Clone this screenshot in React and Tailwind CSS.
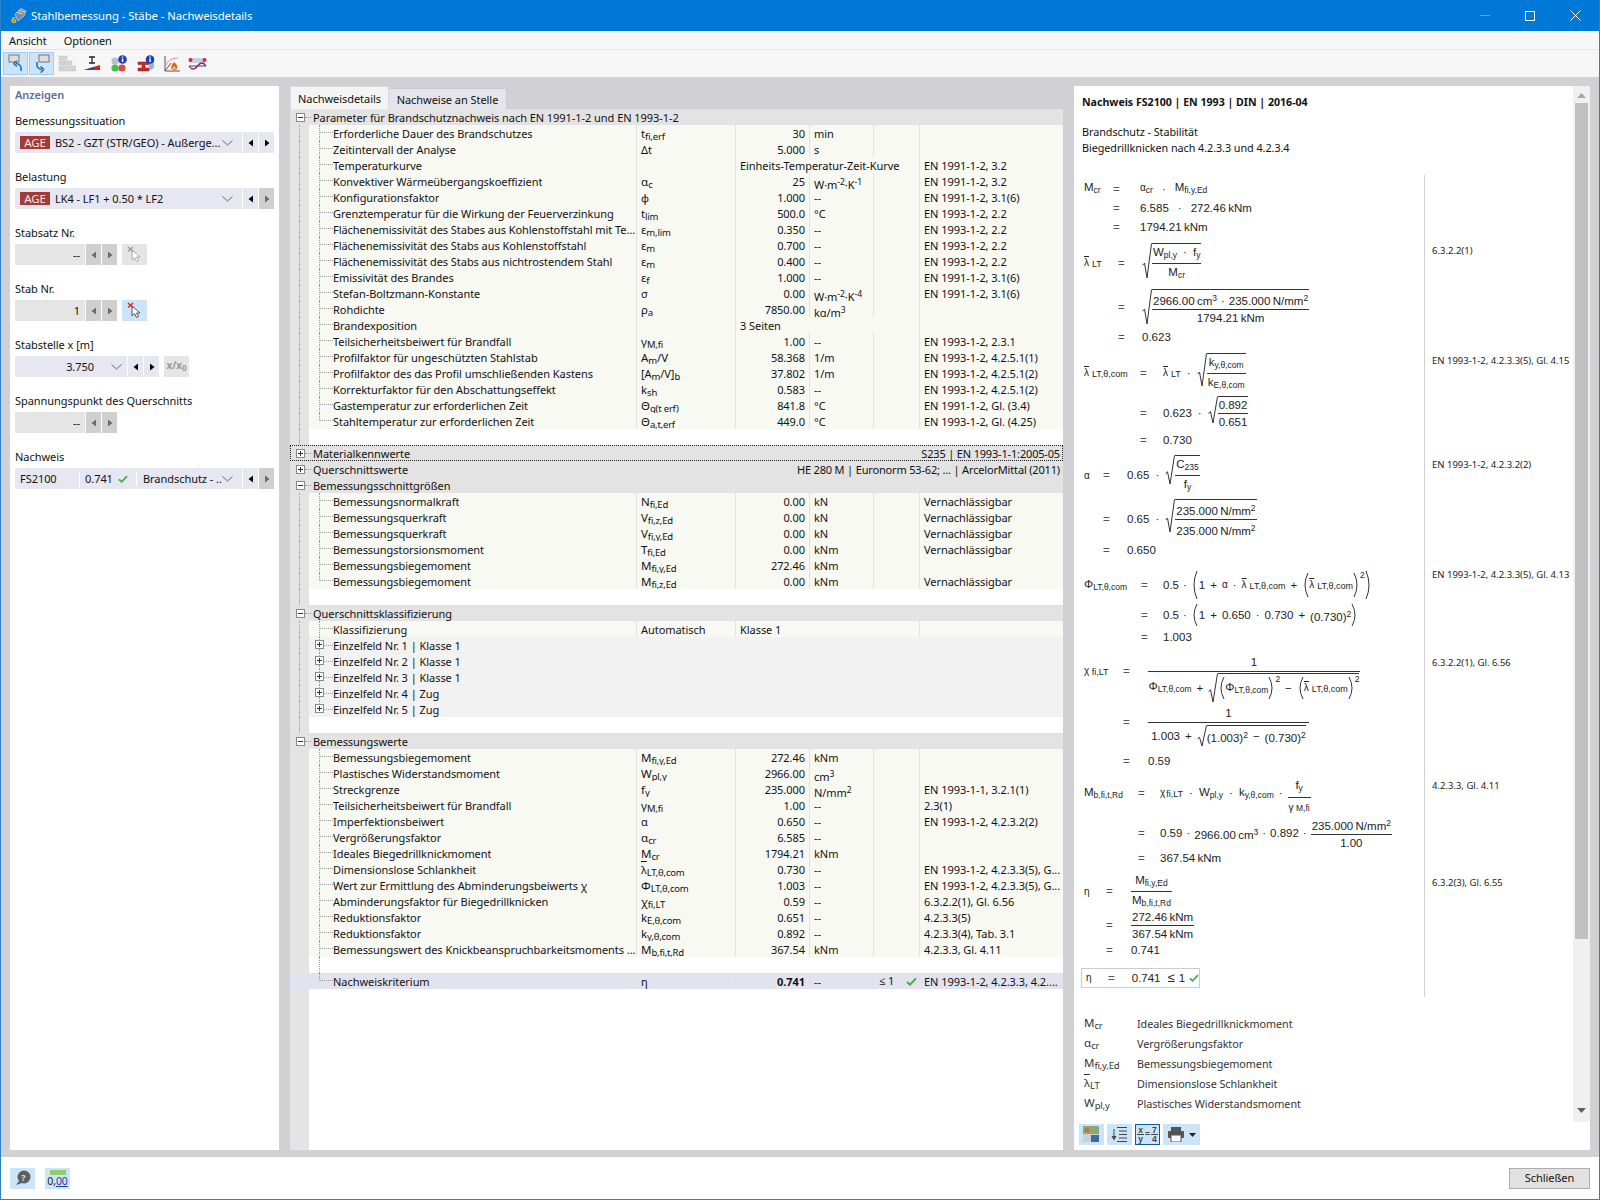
import React from "react";

const Sub = ({ children }) => <span className="text-[9.5px] align-[-2px] tracking-[-0.2px]">{children}</span>;
const Sup = ({ children }) => <span className="text-[8.5px] align-[4px]">{children}</span>;
const S = (m, s, t) => (<span className="text-[11.5px]">{m}<Sub>{s}</Sub>{t}</span>);
const Tick = ({ className = "w-[12px] h-[10px]" }) => (
  <svg viewBox="0 0 12 10" className={className}><path d="M1 5.5 L4.3 8.5 L11 1.5" fill="none" stroke="#3cb043" strokeWidth="2.2" /></svg>
);
const Box = ({ minus }) => (
  <svg width="9" height="9" viewBox="0 0 9 9" className="shrink-0 bg-white">
    <rect x="0.5" y="0.5" width="8" height="8" fill="none" stroke="#8a8a8a" />
    <path d={minus ? "M2 4.5H7" : "M2 4.5H7M4.5 2V7"} stroke="#333" />
  </svg>
);
const Gutter = ({ line = true, bg = "bg-[#e4e4e4]" }) => (
  <div className={`w-[19px] shrink-0 h-full ${bg}`}>
    {line && <div className="ml-[9px] h-full border-l border-dotted border-[#9a9a9a]" />}
  </div>
);
const HeaderRow = ({ title, right, plus, focus }) => (
  <div className={`flex items-center h-4 bg-[#e3e3e3] pl-[6px] ${focus ? "outline-1 outline-dotted outline-[#222] -outline-offset-1" : ""}`}>
    <Box minus={!plus} />
    <div className="w-[6px] h-0 mr-[2px] border-t border-dotted border-[#999]" />
    <span className="truncate mt-px">{title}</span>
    {right && <span className="ml-auto pr-[3px] mt-px tracking-[-0.17px]">{right}</span>}
  </div>
);
const Blank = ({ tree, line = true }) => (
  <div className="flex h-4 bg-white">
    <Gutter line={line} />
    {tree && <div className="ml-[10px] h-full border-l border-dotted border-[#9a9a9a]" />}
  </div>
);
const Tree = ({ last }) => (
  <div className={`w-[14px] shrink-0 h-full ${last ? "" : "border-l border-dotted border-[#9a9a9a]"}`}>
    <div className={`h-[8px] border-b border-dotted border-[#9a9a9a] ${last ? "border-l" : ""}`} />
  </div>
);
const col = "border-l border-[#e2e2e2] h-full";
const Row = ({ r, last, bg = "bg-[#f9f9f3]", line = true, gutter }) => (
  <div className={`flex h-4 leading-[18px] ${bg}`}>
    <Gutter line={line} bg={gutter} />
    <div className="w-[327px] shrink-0 flex pl-[10px] overflow-hidden">
      <Tree last={last} />
      <span className="whitespace-nowrap overflow-hidden">{r[0]}</span>
    </div>
    <div className={`w-[99px] shrink-0 pl-[4px] ${col}`}>{r[1]}</div>
    {r[5] ? (
      <div className={`w-[138px] shrink-0 pl-[4px] whitespace-nowrap ${col}`}>{r[5]}</div>
    ) : (
      <>
        <div className={`w-[74px] shrink-0 pr-[4px] text-right ${col} ${r[6] ? "font-bold" : ""}`}>{r[2]}</div>
        <div className={`w-[64px] shrink-0 pl-[4px] ${col}`}>{r[3]}</div>
      </>
    )}
    <div className={`w-[46px] shrink-0 ${r[5] ? "" : col} flex items-center`}>{r[6] && <><span className="ml-[5px]">≤ 1</span><Tick className="ml-[12px] w-[11px] h-[9px]" /></>}</div>
    <div className={`flex-1 pl-[4px] whitespace-nowrap overflow-hidden ${col}`}>{r[4]}</div>
  </div>
);
const W2K1 = <span>W·m<Sup>-2</Sup>·K<Sup>-1</Sup></span>;
const W2K4 = <span>W·m<Sup>-2</Sup>·K<Sup>-4</Sup></span>;
const sec1 = [
  ["Erforderliche Dauer des Brandschutzes", S("t", "fi,erf"), "30", "min", ""],
  ["Zeitintervall der Analyse", "Δt", "5.000", "s", ""],
  ["Temperaturkurve", "", "", "", "EN 1991-1-2, 3.2", "Einheits-Temperatur-Zeit-Kurve"],
  ["Konvektiver Wärmeübergangskoeffizient", S("α", "c"), "25", W2K1, "EN 1991-1-2, 3.2"],
  ["Konfigurationsfaktor", "φ", "1.000", "--", "EN 1991-1-2, 3.1(6)"],
  ["Grenztemperatur für die Wirkung der Feuerverzinkung", S("t", "lim"), "500.0", "°C", "EN 1993-1-2, 2.2"],
  ["Flächenemissivität des Stabes aus Kohlenstoffstahl mit Te…", S("ε", "m,lim"), "0.350", "--", "EN 1993-1-2, 2.2"],
  ["Flächenemissivität des Stabs aus Kohlenstoffstahl", S("ε", "m"), "0.700", "--", "EN 1993-1-2, 2.2"],
  ["Flächenemissivität des Stabs aus nichtrostendem Stahl", S("ε", "m"), "0.400", "--", "EN 1993-1-2, 2.2"],
  ["Emissivität des Brandes", S("ε", "f"), "1.000", "--", "EN 1991-1-2, 3.1(6)"],
  ["Stefan-Boltzmann-Konstante", "σ", "0.00", W2K4, "EN 1991-1-2, 3.1(6)"],
  ["Rohdichte", S("ρ", "a"), "7850.00", <span>kg/m<Sup>3</Sup></span>, ""],
  ["Brandexposition", "", "", "", "", "3 Seiten"],
  ["Teilsicherheitsbeiwert für Brandfall", S("γ", "M,fi"), "1.00", "--", "EN 1993-1-2, 2.3.1"],
  ["Profilfaktor für ungeschützten Stahlstab", S("A", "m", "/V"), "58.368", "1/m", "EN 1993-1-2, 4.2.5.1(1)"],
  ["Profilfaktor des das Profil umschließenden Kastens", <span>[A<Sub>m</Sub>/V]<Sub>b</Sub></span>, "37.802", "1/m", "EN 1993-1-2, 4.2.5.1(2)"],
  ["Korrekturfaktor für den Abschattungseffekt", S("k", "sh"), "0.583", "--", "EN 1993-1-2, 4.2.5.1(2)"],
  ["Gastemperatur zur erforderlichen Zeit", S("Θ", "g(t erf)"), "841.8", "°C", "EN 1991-1-2, Gl. (3.4)"],
  ["Stahltemperatur zur erforderlichen Zeit", S("Θ", "a,t,erf"), "449.0", "°C", "EN 1993-1-2, Gl. (4.25)"],
];
const sec2 = [
  ["Bemessungsnormalkraft", S("N", "fi,Ed"), "0.00", "kN", "Vernachlässigbar"],
  ["Bemessungsquerkraft", S("V", "fi,z,Ed"), "0.00", "kN", "Vernachlässigbar"],
  ["Bemessungsquerkraft", S("V", "fi,y,Ed"), "0.00", "kN", "Vernachlässigbar"],
  ["Bemessungstorsionsmoment", S("T", "fi,Ed"), "0.00", "kNm", "Vernachlässigbar"],
  ["Bemessungsbiegemoment", S("M", "fi,y,Ed"), "272.46", "kNm", ""],
  ["Bemessungsbiegemoment", S("M", "fi,z,Ed"), "0.00", "kNm", "Vernachlässigbar"],
];
const sec3 = [
  ["Bemessungsbiegemoment", S("M", "fi,y,Ed"), "272.46", "kNm", ""],
  ["Plastisches Widerstandsmoment", S("W", "pl,y"), "2966.00", <span>cm<Sup>3</Sup></span>, ""],
  ["Streckgrenze", S("f", "y"), "235.000", <span>N/mm<Sup>2</Sup></span>, "EN 1993-1-1, 3.2.1(1)"],
  ["Teilsicherheitsbeiwert für Brandfall", S("γ", "M,fi"), "1.00", "--", "2.3(1)"],
  ["Imperfektionsbeiwert", "α", "0.650", "--", "EN 1993-1-2, 4.2.3.2(2)"],
  ["Vergrößerungsfaktor", S("α", "cr"), "6.585", "--", ""],
  ["Ideales Biegedrillknickmoment", S("M", "cr"), "1794.21", "kNm", ""],
  ["Dimensionslose Schlankheit", <span><span className="overline">λ</span><Sub>LT,θ,com</Sub></span>, "0.730", "--", "EN 1993-1-2, 4.2.3.3(5), G..."],
  ["Wert zur Ermittlung des Abminderungsbeiwerts χ", S("Φ", "LT,θ,com"), "1.003", "--", "EN 1993-1-2, 4.2.3.3(5), G..."],
  ["Abminderungsfaktor für Biegedrillknicken", S("χ", "fi,LT"), "0.59", "--", "6.3.2.2(1), Gl. 6.56"],
  ["Reduktionsfaktor", S("k", "E,θ,com"), "0.651", "--", "4.2.3.3(5)"],
  ["Reduktionsfaktor", S("k", "y,θ,com"), "0.892", "--", "4.2.3.3(4), Tab. 3.1"],
  ["Bemessungswert des Knickbeanspruchbarkeitsmoments ...", S("M", "b,fi,t,Rd"), "367.54", "kNm", "4.2.3.3, Gl. 4.11"],
];

const Tri = ({ dir = "r", off }) => (
  <svg width="6" height="8" viewBox="0 0 6 8"><path d={dir === "r" ? "M1 0.5 L5.5 4 L1 7.5Z" : "M5 0.5 L0.5 4 L5 7.5Z"} fill={off ? "#6a6a6a" : "#000"} /></svg>
);
const Step = ({ dir, off, gray }) => (
  <div className={`w-[15px] h-[21px] ml-px flex items-center justify-center ${gray ? "bg-[#cfcfcf]" : "bg-[#e6e7f1]"}`}><Tri dir={dir} off={off} /></div>
);
const Chev = () => (
  <svg width="11" height="6" viewBox="0 0 11 6" className="shrink-0"><path d="M0.5 0.5 L5.5 5 L10.5 0.5" fill="none" stroke="#666" /></svg>
);
const Age = () => <span className="w-[30px] h-[13px] mr-[5px] bg-[#a33a35] text-[#f7e9e8] text-[11.5px] leading-[13px] text-center shrink-0">AGE</span>;
const Field = ({ label, children }) => (
  <div className="h-[56px]">
    <div className="h-[22px] leading-[22px]">{label}</div>
    <div className="flex h-[21px]">{children}</div>
  </div>
);
const Sel = ({ children }) => (
  <div className="w-[227px] flex items-center bg-[#e6e7f1] pl-[5px] pr-[9px]"><span className="flex-1 flex items-center whitespace-nowrap overflow-hidden">{children}</span><Chev /></div>
);
const Gray = ({ v }) => <div className="w-[70px] bg-[#e5e5e5] text-right pr-[5px] leading-[21px]">{v}</div>;
const Cursor = ({ red }) => (
  <div className={`w-[25px] h-[21px] ml-[5px] flex items-center justify-center ${red ? "bg-[#cce4f7]" : "bg-[#e5e5e5]"}`}>
    <svg width="16" height="17" viewBox="0 0 16 17">
      <path d="M5 4 L5 14 L7.5 11.5 L9.5 15.5 L11.5 14.5 L9.5 11 L13 11Z" fill="#fff" stroke={red ? "#555" : "#aaa"} />
      <path d="M1 1 L6 5.5 M6 1 L1 5.5" stroke={red ? "#e02020" : "#999"} strokeWidth="1.4" />
    </svg>
  </div>
);

/* math */
const m = "text-[8.5px] align-[-2px]";
const M = ({ a, b }) => <span className="whitespace-nowrap">{a}<span className={m}>{b}</span></span>;
const Lam = ({ b }) => <span className="whitespace-nowrap"><span className="overline text-[10px]">λ</span><span className="text-[9px] align-[-1px] ml-[3px]">{b}</span></span>;
const Th = "LT,θ,com";
const Dot = ({ cls = "mx-[6px]" }) => <span className={cls}>·</span>;
const Pl = ({ c = "+" }) => <span className="mx-[5px]">{c}</span>;
const Frac = ({ a, b, cls = "" }) => (
  <span className={`inline-flex flex-col items-center leading-[16px] ${cls}`}>
    <span className="px-px whitespace-nowrap">{a}</span>
    <span className="self-stretch border-t border-[#333] px-px text-center whitespace-nowrap">{b}</span>
  </span>
);
const Rad = ({ h = 34, children }) => (
  <span className="inline-flex items-stretch">
    <svg width="10" height={h} viewBox={`0 0 10 ${h}`} className="shrink-0"><path d={`M0.5 ${h * 0.62} L2.5 ${h * 0.56} L5 ${h - 1} L9.5 0.5`} fill="none" stroke="#333" /></svg>
    <span className="border-t border-[#333] inline-flex items-center">{children}</span>
  </span>
);
const Par = ({ h = 30, right }) => (
  <svg width="7" height={h} viewBox={`0 0 7 ${h}`} className="shrink-0"><path d={right ? `M1 1 Q7 ${h / 2} 1 ${h - 1}` : `M6 1 Q0 ${h / 2} 6 ${h - 1}`} fill="none" stroke="#333" /></svg>
);
const NMM = <span>N/mm<Sup>2</Sup></span>;
const Pw = ({ children }) => <span className="whitespace-nowrap">{children}<Sup>2</Sup></span>;
const PS = () => <span className="self-start text-[8.5px] leading-[10px]">2</span>;
const MRow = ({ cls, L, E, label, up = "", children }) => (
  <div className={`flex items-center ${cls}`}>
    <div className={`${L} shrink-0 ${up}`}>{label}</div>
    <div className={`${E} shrink-0 text-[#555] ${up}`}>=</div>
    <div className="flex items-center whitespace-nowrap">{children}</div>
  </div>
);
const Group = ({ r, pt = "", children }) => (
  <div className="flex">
    <div className="w-[340px] shrink-0">{children}</div>
    <div className={`flex-1 border-l border-[#cfcfcf] pl-[7px] text-[9.5px] leading-[12px] whitespace-nowrap font-['Noto_Sans',sans-serif] ${pt}`}>{r}</div>
  </div>
);

const Btn = ({ children, cls = "" }) => <div className={`h-[21px] flex items-center justify-center bg-[#cce4f7] ${cls}`}>{children}</div>;

export default function App() {
  return (
    <div className="w-[1600px] h-[1200px] flex flex-col overflow-hidden border-x border-b border-[#2b7fcb] bg-white text-[#111] text-[11px] tracking-[-0.05px] leading-4 font-['Noto_Sans','Open_Sans',sans-serif]">
      {/* title bar */}
      <div className="h-[31px] shrink-0 bg-[#0078d7] flex items-center text-white text-[11.3px]">
        <svg width="17" height="17" viewBox="0 0 17 17" className="ml-[9px] mr-[4px]">
          <path d="M5 7 L11 1.5 L16 4 L14 9 L8 14Z" fill="#7c8a96" stroke="#d5dde3" strokeWidth=".7" />
          <path d="M7 5.5 L13 7 M9 3.5 L15 5" stroke="#e6ecf0" strokeWidth=".8" />
          <text x="1" y="16" fontSize="9" fontWeight="700" fill="#f0c020">6</text>
        </svg>
        <span>Stahlbemessung - Stäbe - Nachweisdetails</span>
        <div className="ml-auto flex items-center">
          <div className="w-[10px] h-px bg-[#5aa7e6] mr-[35px]" />
          <div className="w-[10px] h-[10px] border border-white mr-[35px]" />
          <svg width="11" height="11" viewBox="0 0 11 11" className="mr-[18px]"><path d="M.5 .5 L10.5 10.5 M10.5 .5 L.5 10.5" stroke="#fff" /></svg>
        </div>
      </div>
      {/* menu */}
      <div className="h-[19px] shrink-0 bg-[#f6f6f6] border-b border-[#e6e6e6] flex items-center pl-[8px] pt-[2px] gap-[17px]">
        <span>Ansicht</span><span>Optionen</span>
      </div>
      {/* toolbar */}
      <div className="h-[27px] shrink-0 bg-[#f6f6f6] flex items-center pl-[2px]">
        <div className="w-[25px] h-[23px] bg-[#cce4f7] border border-[#a3cdf0] flex items-center justify-center">
          <svg width="18" height="19" viewBox="0 0 18 19"><rect x="2" y="1" width="10" height="7" fill="#ddd" stroke="#777" /><path d="M14 17 Q15 10 9 9.5 M6.5 9.5 L10 7 M6.5 9.5 L10 12.5" fill="none" stroke="#2b6cb0" strokeWidth="1.6" /></svg>
        </div>
        <div className="w-[25px] h-[23px] ml-[1px] bg-[#cce4f7] border border-[#a3cdf0] flex items-center justify-center">
          <svg width="18" height="19" viewBox="0 0 18 19"><rect x="6" y="1" width="10" height="7" fill="#ddd" stroke="#777" /><path d="M4 8 Q3 15 9 15.5 M11 15.5 L7.5 12.5 M11 15.5 L7.5 18.5" fill="none" stroke="#2b6cb0" strokeWidth="1.6" /></svg>
        </div>
        <svg width="18" height="18" viewBox="0 0 18 18" className="ml-[4px]"><path d="M1 1h8v4H1zM1 6h5v4H1zM1 11h17v5H1zM6 6h8v4H6z" fill="#d4d4d4" stroke="#c4c4c4" strokeWidth=".5" /></svg>
        <svg width="18" height="18" viewBox="0 0 18 18" className="ml-[7px]"><path d="M6 2h6M9 2v6M6 8h6" stroke="#223" strokeWidth="1.3" /><path d="M1 15 L17 10 L17 15Z" fill="#c62828" /><path d="M1 15 L11 12 L11 15Z" fill="#1d4e9e" /></svg>
        <svg width="18" height="18" viewBox="0 0 18 18" className="ml-[9px]"><circle cx="5" cy="6" r="3.6" fill="#bcbcc8" /><circle cx="5" cy="13" r="3.6" fill="#41c24a" /><circle cx="12" cy="13" r="3.6" fill="#e0474c" /><circle cx="12.5" cy="4.5" r="4.3" fill="#1a3fb0" /><rect x="11.8" y="3.5" width="1.5" height="3.5" fill="#fff" /><rect x="11.8" y="1.5" width="1.5" height="1.2" fill="#fff" /></svg>
        <svg width="18" height="18" viewBox="0 0 18 18" className="ml-[9px]"><path d="M1 7h11v2.5H8V13h4v3H1v-3h4V9.5H1z" fill="#c92a2a" stroke="#7a1818" strokeWidth=".5" /><path d="M12 7 L17 6 V13 L12 16Z" fill="#9fb2cc" /><circle cx="13" cy="4.5" r="4.3" fill="#1a3fb0" /><rect x="12.3" y="3.5" width="1.5" height="3.5" fill="#fff" /><rect x="12.3" y="1.5" width="1.5" height="1.2" fill="#fff" /></svg>
        <svg width="18" height="18" viewBox="0 0 18 18" className="ml-[8px]"><path d="M2 1V16H17 M2 16 L8 8" fill="none" stroke="#555" /><path d="M2 12 Q5 3 15 3" fill="none" stroke="#e59090" /><path d="M11 7 Q15 10 14 13.5 A3.4 3.4 0 0 1 8 13 Q8 10 11 7Z" fill="#e2611c" /><circle cx="11" cy="13" r="1.6" fill="#ffd24a" /></svg>
        <svg width="19" height="18" viewBox="0 0 19 18" className="ml-[7px]"><rect x="2" y="3" width="15" height="5" fill="#c4d2e4" /><circle cx="2.5" cy="5" r="2" fill="#d62828" /><circle cx="16.5" cy="5" r="2" fill="#d62828" /><path d="M1 11 H18" stroke="#445" /><path d="M1 11 Q5 17 9.5 11 T18 11" fill="none" stroke="#8a1c6c" strokeWidth="1.3" /></svg>
      </div>
      {/* main */}
      <div className="flex-1 min-h-0 bg-[#d1d0d5] flex pl-[9px] pr-[9px] pt-[9px] pb-[7px]">
        {/* left panel */}
        <div className="w-[269px] shrink-0 bg-white pl-[5px]">
          <div className="h-[24px] leading-[18px] font-semibold text-[#5b6d9c]">Anzeigen</div>
          <Field label="Bemessungssituation">
            <Sel><Age />BS2 - GZT (STR/GEO) - Außerge...</Sel><Step dir="l" /><Step />
          </Field>
          <Field label="Belastung">
            <Sel><Age />LK4 - LF1 + 0.50 * LF2</Sel><Step dir="l" /><Step off gray />
          </Field>
          <Field label="Stabsatz Nr."><Gray v="--" /><Step dir="l" off gray /><Step off gray /><Cursor /></Field>
          <Field label="Stab Nr."><Gray v="1" /><Step dir="l" off gray /><Step off gray /><Cursor red /></Field>
          <Field label="Stabstelle x [m]">
            <div className="w-[112px] bg-[#e6e7f1] flex items-center justify-end pr-[5px]"><span className="mr-[17px]">3.750</span><Chev /></div>
            <Step dir="l" /><Step />
            <div className="w-[25px] h-[21px] ml-[5px] bg-[#e5e5e5] text-[#999] text-[10px] font-bold flex items-center justify-center"><span>x/x<span className="text-[8px] align-[-2px]">0</span></span></div>
          </Field>
          <Field label="Spannungspunkt des Querschnitts"><Gray v="--" /><Step dir="l" off gray /><Step off gray /></Field>
          <Field label="Nachweis">
            <div className="w-[227px] flex items-center bg-[#e6e7f1]">
              <span className="w-[65px] pl-[5px] border-r border-white">FS2100</span>
              <span className="w-[57px] pl-[5px] flex items-center border-r border-white gap-[5px]">0.741<Tick className="w-[10px] h-[8px]" /></span>
              <span className="flex-1 pl-[6px] whitespace-nowrap overflow-hidden">Brandschutz - ...</span>
              <span className="pr-[9px]"><Chev /></span>
            </div>
            <Step dir="l" /><Step off gray />
          </Field>
        </div>
        {/* center */}
        <div className="w-[773px] shrink-0 ml-[11px] flex flex-col">
          <div className="h-[23px] shrink-0 flex items-end">
            <div className="w-[99px] h-[23px] bg-[#f4f4f4] border-x border-t border-[#d9d9df] pt-px flex items-center justify-center">Nachweisdetails</div>
            <div className="w-[118px] h-[21px] bg-[#e4e4ea] border-r border-t border-[#c9c9d6] pt-px flex items-center justify-center">Nachweise an Stelle</div>
          </div>
          <div className="flex-1 min-h-0 bg-white flex flex-col">
            <HeaderRow title="Parameter für Brandschutznachweis nach EN 1991-1-2 und EN 1993-1-2" />
            {sec1.map((r, i) => <Row key={i} r={r} last={i === sec1.length - 1} />)}
            <Blank />
            <HeaderRow focus plus title="Materialkennwerte" right="S235 | EN 1993-1-1:2005-05" />
            <HeaderRow plus title="Querschnittswerte" right="HE 280 M | Euronorm 53-62; ... | ArcelorMittal (2011)" />
            <HeaderRow title="Bemessungsschnittgrößen" />
            {sec2.map((r, i) => <Row key={i} r={r} last={i === sec2.length - 1} />)}
            <Blank />
            <HeaderRow title="Querschnittsklassifizierung" />
            <div className="flex h-4 leading-[18px] bg-[#f9f9f3]">
              <Gutter />
              <div className="w-[327px] shrink-0 flex pl-[10px]"><Tree /><span>Klassifizierung</span></div>
              <div className={`w-[99px] pl-[4px] ${col}`}>Automatisch</div>
              <div className={`w-[184px] pl-[4px] ${col}`}>Klasse 1</div>
              <div className={`flex-1 ${col}`} />
            </div>
            {["Einzelfeld Nr. 1 | Klasse 1", "Einzelfeld Nr. 2 | Klasse 1", "Einzelfeld Nr. 3 | Klasse 1", "Einzelfeld Nr. 4 | Zug", "Einzelfeld Nr. 5 | Zug"].map((t, i) => (
              <div key={i} className="flex h-4 bg-[#f2f2f2] items-center">
                <Gutter />
                <div className="ml-[6px] w-[9px] h-full flex flex-col items-center">
                  <div className="h-[3px] border-l border-dotted border-[#9a9a9a]" />
                  <Box />
                  {i < 4 && <div className="flex-1 border-l border-dotted border-[#9a9a9a]" />}
                </div>
                <div className="w-[9px] h-0 border-t border-dotted border-[#999]" />
                <span className="mt-px">{t}</span>
              </div>
            ))}
            <Blank />
            <HeaderRow title="Bemessungswerte" />
            {sec3.map((r, i) => <Row key={i} r={r} line={false} />)}
            <Blank tree line={false} />
            <Row line={false} last bg="bg-[#e3e3f0]" gutter="bg-[#e3e3f0]" r={["Nachweiskriterium", "η", "0.741", "--", "EN 1993-1-2, 4.2.3.3, 4.2....", null, true]} />
            <div className="flex-1 flex"><Gutter line={false} /></div>
          </div>
        </div>
        {/* right */}
        <div className="w-[516px] shrink-0 ml-[11px] bg-white flex flex-col">
          <div className="flex h-[1036px] shrink-0">
            <div className="flex-1 min-w-0 overflow-hidden pl-[8px]">
              <div className="mt-[8px] h-4 font-bold text-[10.6px] tracking-normal">Nachweis FS2100 | EN 1993 | DIN | 2016-04</div>
              <div className="mt-[14px] h-4 text-[10.8px] leading-4">Brandschutz - Stabilität</div>
              <div className="h-[15px] text-[10.8px] leading-[15px]">Biegedrillknicken nach 4.2.3.3 und 4.2.3.4</div>
              <div className="mt-[20px] -ml-[6px] pl-[8px] text-[11.5px] tracking-normal leading-[14px] text-[#222] font-['Liberation_Sans',Arial,sans-serif]">
                <Group>
                  <MRow cls="mt-[4px] h-[19px]" L="w-[29px]" E="w-[27px]" label={<M a="M" b="cr" />}><M a={<span className="text-[10px]">α</span>} b="cr" /><Dot cls="mx-[9px]" /><M a="M" b="fi,y,Ed" /></MRow>
                  <MRow cls="h-[19px]" L="w-[29px]" E="w-[27px]">6.585<Dot cls="mx-[9px]" />272.46{"\u2009"}kNm</MRow>
                  <MRow cls="h-[19px]" L="w-[29px]" E="w-[27px]">1794.21{"\u2009"}kNm</MRow>
                </Group>
                <Group r="6.3.2.2(1)" pt="pt-[9px]">
                  <MRow cls="mt-[9px] h-[36px]" L="w-[34px]" E="w-[24px]" label={<Lam b="LT" />}><Rad h={36}><Frac a={<><M a="W" b="pl,y" /><Dot /><M a="f" b="y" /></>} b={<M a="M" b="cr" />} /></Rad></MRow>
                  <MRow cls="mt-[8px] h-[36px]" L="w-[34px]" E="w-[24px]"><Rad h={36}><Frac a={<>2966.00{"\u2009"}cm<Sup>3</Sup><Dot cls="mx-[4px]" />235.000{"\u2009"}{NMM}</>} b={"1794.21\u2009kNm"} /></Rad></MRow>
                  <MRow cls="mt-[2px] h-[19px]" L="w-[34px]" E="w-[24px]">0.623</MRow>
                </Group>
                <Group r="EN 1993-1-2, 4.2.3.3(5), Gl. 4.15" pt="pt-[9px]">
                  <MRow cls="mt-[10px] h-[34px]" L="w-[56px]" E="w-[23px]" label={<Lam b={Th} />}><Lam b="LT" /><Dot /><Rad h={34}><Frac a={<M a="k" b="y,θ,com" />} b={<M a="k" b="E,θ,com" />} /></Rad></MRow>
                  <MRow cls="mt-[9px] h-[28px]" L="w-[56px]" E="w-[23px]">0.623<Dot /><Rad h={28}><Frac cls="leading-[13px]" a="0.892" b="0.651" /></Rad></MRow>
                  <MRow cls="mt-[3px] h-[19px]" L="w-[56px]" E="w-[23px]">0.730</MRow>
                </Group>
                <Group r="EN 1993-1-2, 4.2.3.2(2)" pt="pt-[10px]">
                  <MRow cls="mt-[11px] h-[30px]" L="w-[19px]" E="w-[24px]" label={<span className="text-[10px]">α</span>}>0.65<Dot /><Rad h={30}><Frac cls="leading-[14px]" a={<M a="C" b="235" />} b={<M a="f" b="y" />} /></Rad></MRow>
                  <MRow cls="mt-[12px] h-[34px]" L="w-[19px]" E="w-[24px]">0.65<Dot /><Rad h={34}><Frac a={<>235.000{"\u2009"}{NMM}</>} b={<>235.000{"\u2009"}{NMM}</>} /></Rad></MRow>
                  <MRow cls="mt-[4px] h-[19px]" L="w-[19px]" E="w-[24px]">0.650</MRow>
                </Group>
                <Group r="EN 1993-1-2, 4.2.3.3(5), Gl. 4.13" pt="pt-[10px]">
                  <MRow cls="mt-[10px] h-[32px]" L="w-[57px]" E="w-[22px]" label={<M a="Φ" b={Th} />}>0.5<Dot cls="mx-[4px]" /><Par h={30} /><span className="ml-px">1</span><Pl /><span className="text-[10px]">α</span><Dot cls="mx-[5px]" /><Lam b={Th} /><Pl /><Par h={26} /><Lam b={Th} /><Par h={26} right /><PS /><Par h={30} right /></MRow>
                  <MRow cls="mt-px h-[26px]" L="w-[57px]" E="w-[22px]">0.5<Dot cls="mx-[4px]" /><Par h={24} /><span className="ml-px">1</span><Pl />0.650<Dot cls="mx-[5px]" />0.730<Pl /><Pw>(0.730)</Pw><Par h={24} right /></MRow>
                  <MRow cls="h-[18px]" L="w-[57px]" E="w-[22px]">1.003</MRow>
                </Group>
                <Group r="6.3.2.2(1), Gl. 6.56" pt="pt-[11px]">
                  <MRow cls="mt-[9px] h-[48px]" up="pb-[16px]" L="w-[39px]" E="w-[25px]" label={<span><span className="text-[10px]">χ</span><span className="text-[9px] align-[-1px]"> fi,LT</span></span>}>
                    <span className="w-[212px] inline-flex flex-col items-center">
                      <span className="h-[16px]">1</span>
                      <span className="self-stretch border-t border-[#333] flex items-center justify-center h-[32px]"><M a="Φ" b={Th} /><Pl /><Rad h={30}><Par h={24} /><M a="Φ" b={Th} /><Par h={24} right /><PS /><Pl c="−" /><Par h={24} /><Lam b={Th} /><Par h={24} right /><PS /></Rad></span>
                    </span>
                  </MRow>
                  <MRow cls="mt-[2px] h-[44px]" up="pb-[10px]" L="w-[39px]" E="w-[25px]">
                    <span className="w-[161px] inline-flex flex-col items-center">
                      <span className="h-[16px]">1</span>
                      <span className="self-stretch border-t border-[#333] flex items-center justify-center h-[27px]">1.003<Pl /><Rad h={22}><Pw>(1.003)</Pw><Pl c="−" /><Pw>(0.730)</Pw></Rad></span>
                    </span>
                  </MRow>
                  <MRow cls="mt-[2px] h-[19px]" L="w-[39px]" E="w-[25px]">0.59</MRow>
                </Group>
                <Group r="4.2.3.3, Gl. 4.11" pt="pt-[10px]">
                  <MRow cls="mt-[7px] h-[38px]" up="pb-[6px]" L="w-[54px]" E="w-[22px]" label={<M a="M" b="b,fi,t,Rd" />}>
                    <span className="pb-[6px] flex items-center"><span><span className="text-[10px]">χ</span><span className="text-[9px] align-[-1px] ml-px">fi,LT</span></span><Dot /><M a="W" b="pl,y" /><Dot /><M a="k" b="y,θ,com" /><Dot cls="mx-[5px]" /></span>
                    <Frac cls="leading-[18px]" a={<M a="f" b="y" />} b={<span><span className="text-[10px]">γ</span><span className="text-[8.5px]"> M,fi</span></span>} />
                  </MRow>
                  <MRow cls="mt-[4px] h-[28px]" L="w-[54px]" E="w-[22px]">0.59<Dot cls="mx-[4px]" /><span className="whitespace-nowrap">2966.00{"\u2009"}cm<Sup>3</Sup></span><Dot cls="mx-[4px]" />0.892<Dot cls="mx-[4px]" /><Frac cls="leading-[15px]" a={<>235.000{"\u2009"}{NMM}</>} b="1.00" /></MRow>
                  <MRow cls="mt-px h-[19px]" L="w-[54px]" E="w-[22px]">367.54{"\u2009"}kNm</MRow>
                </Group>
                <Group r="6.3.2(3), Gl. 6.55" pt="pt-[10px]">
                  <MRow cls="mt-[7px] h-[34px]" L="w-[22px]" E="w-[25px]" label={<span className="text-[10px]">η</span>}><Frac a={<M a="M" b="fi,y,Ed" />} b={<M a="M" b="b,fi,t,Rd" />} /></MRow>
                  <MRow cls="h-[34px]" L="w-[22px]" E="w-[25px]"><Frac a={"272.46\u2009kNm"} b={"367.54\u2009kNm"} /></MRow>
                  <MRow cls="h-[16px]" L="w-[22px]" E="w-[25px]">0.741</MRow>
                  <div className="mt-[10px] mb-[9px] -ml-[3px] w-[119px] h-[20px] border border-[#ccc] pl-[4px] flex items-center">
                    <span className="w-[22px] text-[10px]">η</span><span className="w-[24px] text-[#555]">=</span>0.741<span className="ml-[7px] mr-[4px] text-[13px]">≤</span>1<Tick className="ml-[4px] w-[10px] h-[8px]" />
                  </div>
                </Group>
              </div>
              <div className="mt-[17px] ml-[2px] h-[103px] overflow-hidden text-[10.8px]">
                {[
                  [S("M", "cr"), "Ideales Biegedrillknickmoment"],
                  [S("α", "cr"), "Vergrößerungsfaktor"],
                  [S("M", "fi,y,Ed"), "Bemessungsbiegemoment"],
                  [<span className="text-[11.5px]"><span className="overline">λ</span><Sub>LT</Sub></span>, "Dimensionslose Schlankheit"],
                  [S("W", "pl,y"), "Plastisches Widerstandsmoment"],
                  [S("f", "y"), "Streckgrenze"],
                ].map((l, i) => (
                  <div key={i} className="flex h-[20px] items-center text-[#333]"><span className="w-[53px] shrink-0">{l[0]}</span><span>{l[1]}</span></div>
                ))}
              </div>
            </div>
            <div className="w-[17px] shrink-0 bg-[#f0f0f0] flex flex-col items-center">
              <svg width="9" height="5" viewBox="0 0 9 5" className="mt-[7px]"><path d="M4.5 0 L9 5H0Z" fill="#a6a6a6" /></svg>
              <div className="mt-[5px] w-[13px] h-[836px] bg-[#c0c0c0]" />
              <svg width="9" height="5" viewBox="0 0 9 5" className="mt-[169px]"><path d="M4.5 5 L9 0H0Z" fill="#606060" /></svg>
            </div>
          </div>
          <div className="flex items-start pl-[5px] pt-[2px] gap-[3px]">
            <Btn cls="w-[25px]">
              <svg width="17" height="17" viewBox="0 0 17 17"><rect x="0" y="0" width="16" height="8" fill="#8aa878" /><rect x="0" y="8" width="16" height="8" fill="#cfcfcf" /><rect x="8" y="9" width="8" height="7" fill="#3c6da8" /><path d="M2 2h4v4H2z" fill="#d66a3a" /></svg>
            </Btn>
            <Btn cls="w-[25px]">
              <svg width="17" height="17" viewBox="0 0 17 17"><path d="M6 1.5H16M8 5H16M8 8.5H16M8 12H16M6 15.5H16M3 3V12" stroke="#444" /><path d="M0.5 10 H5.5 L3 14.5Z" fill="#444" /></svg>
            </Btn>
            <div className="w-[25px] h-[21px] bg-[#cce4f7] border border-[#0f5a9c] flex items-center justify-center text-[8.5px] leading-[8.5px] font-bold text-[#444] font-['Liberation_Sans',sans-serif]">
              <span className="flex flex-col items-center"><span className="border-b border-[#444] px-px">x</span><span>y</span></span><span className="mx-px">=</span><span className="flex flex-col items-center"><span className="border-b border-[#444] px-px">7</span><span>4</span></span>
            </div>
            <Btn cls="w-[37px] gap-[5px]">
              <svg width="16" height="15" viewBox="0 0 16 15"><rect x="3" y="0" width="10" height="4" fill="#555" /><rect x="0" y="4" width="16" height="7" rx="1" fill="#555" /><rect x="3" y="8" width="10" height="7" fill="#fff" stroke="#555" /></svg>
              <svg width="7" height="4" viewBox="0 0 7 4"><path d="M0 0H7L3.5 4Z" fill="#222" /></svg>
            </Btn>
          </div>
        </div>
      </div>
      {/* footer */}
      <div className="h-[42px] shrink-0 bg-white flex items-center pl-[9px] pr-[9px]">
        <Btn cls="w-[25px]">
          <svg width="16" height="16" viewBox="0 0 16 16"><circle cx="9" cy="7" r="6.5" fill="#5e5e5e" /><path d="M4 11 L1 15 L7 13Z" fill="#5e5e5e" /><text x="6.3" y="10.5" fontSize="9" fontWeight="700" fill="#cce4f7">?</text></svg>
        </Btn>
        <Btn cls="w-[25px] ml-[10px]">
          <div className="flex flex-col items-center">
            <div className="w-[16px] h-[5px] bg-[#8ccf6c]" />
            <span className="text-[10.5px] leading-[12px] text-[#223]">0,<span className="underline text-[#1d3c8f]">00</span></span>
          </div>
        </Btn>
        <div className="ml-auto w-[81px] h-[21px] bg-[#e1e1e1] border border-[#adadad] flex items-center justify-center">Schließen</div>
      </div>
    </div>
  );
}
